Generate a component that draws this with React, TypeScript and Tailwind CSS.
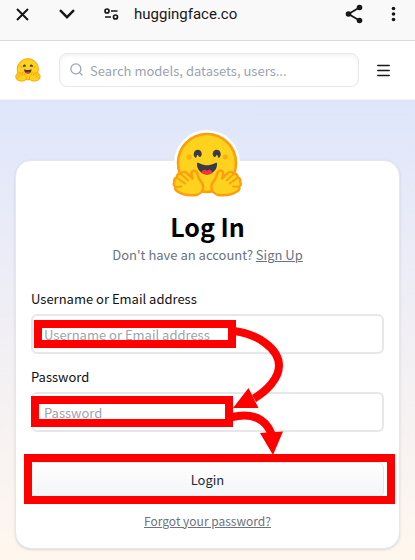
import type { ReactNode } from "react";
import { Menu, Search } from "lucide-react";

function HuggingLogo({ className, halo = false }: { className: string; halo?: boolean }) {
  return (
    <svg viewBox="0 0 71 70" className={className} aria-hidden="true">
      {halo && <circle cx="35" cy="33" r="33" fill="#fff" />}
      <circle cx="35" cy="33" r="29" fill="#ffd21e" stroke="#ff9d0b" strokeWidth="2.6" />
      <circle cx="17.2" cy="27" r="2.6" fill="#ffac14" />
      <circle cx="53.3" cy="27" r="2.6" fill="#ffac14" />
      <path d="M23.800 27.700c-3.300-.9-2.600-8 2-8 4.500.1 5 6 2.300 7.300-1.500.6-1.300-2-2.400-2.100-1.200 0-.8 2.300-1.900 2.800z" fill="#3a3b45" />
      <path d="M46.700 27.700c3.300-.9 2.600-8-2-8-4.500.1-5 6-2.300 7.300 1.500.6 1.300-2 2.400-2.100 1.200 0 .8 2.300 1.900 2.800z" fill="#3a3b45" />
      <path d="M25 33.300c-.7 6 4.500 11.200 10 11.200s10.700-5.200 10-11.200c-.3-1.800-4.300 2-10 2s-9.700-3.800-10-2z" fill="#3a3b45" />
      <path d="M29.700 43c.2-3.700 3.700-4.200 5.300-1.800 1.600-2.400 5.100-1.900 5.300 1.800-3 2.200-7.600 2.200-10.600 0z" fill="#f8313c" />
      <Hand />
      <g transform="matrix(-1 0 0 1 70.500 0)">
        <Hand />
      </g>
    </svg>
  );
}

function Hand() {
  return (
    <g fill="#ffd21e" stroke="#ff9d0b" strokeWidth="2.4" strokeLinecap="round" strokeLinejoin="round">
      <path d="M20.500 48.500c-1-2.500-2-7 .8-7.800 4.200-.7 4.200 4.300 5.700 8 1.800 2.800 4.300 4.500 4.200 8.300-.2 4.500-3.700 8-9.200 8.200-6 .3-12-.7-16.500-3.700-2.200-1.500-3-3.200-2-4.700-2.200-1.300-2.300-3.500-1-4.800-1-2 0-4 2.300-4.200-.3-3 1.700-4.800 4-4 1.500-2.500 4.500-2.500 6.500-.3z" />
      <path d="M15.300 43.500l5.200 5M8.800 43.800l7.200 6.700M4.800 47.800l8.200 5.700M3.500 56.800l6-.3" fill="none" strokeWidth="1.800" />
    </g>
  );
}

function BrowserBar() {
  return (
    <div className="flex h-[41px] items-center border-b border-[#dadada] bg-[#f9f9f9] pb-3 pl-4 pr-[19px] text-[#171717]">
      <button aria-label="Close tab">
        <svg viewBox="0 0 13 13" className="size-[13px]" fill="none" stroke="currentColor" strokeWidth="2">
          <path d="M1 1l11 11M12 1L1 12" />
        </svg>
      </button>
      <button aria-label="Collapse" className="ml-[30px]">
        <svg viewBox="0 0 16 10" className="h-[10px] w-4" fill="none" stroke="currentColor" strokeWidth="2.4">
          <path d="M1 1.200l7 7 7-7" />
        </svg>
      </button>
      <button aria-label="Site settings" className="ml-7">
        <svg viewBox="0 0 16 14" className="h-[14px] w-4" fill="none" stroke="currentColor" strokeWidth="1.700">
          <circle cx="4" cy="4" r="2" />
          <path d="M8 4h6.500M2 10H8" />
          <circle cx="12.500" cy="10" r="2" />
        </svg>
      </button>
      <span className="ml-[15px] flex-1 font-[Roboto,sans-serif] text-[15px] leading-5">huggingface.co</span>
      <button aria-label="Share">
        <svg viewBox="0 0 18 20" className="h-5 w-[18px]" fill="currentColor">
          <path d="M14.500 3.500L3.500 10l11 6.500" fill="none" stroke="currentColor" strokeWidth="1.800" />
          <circle cx="3.500" cy="10" r="2.800" />
          <circle cx="14.500" cy="3.500" r="2.800" />
          <circle cx="14.500" cy="16.500" r="2.800" />
        </svg>
      </button>
      <button aria-label="More" className="ml-7">
        <svg viewBox="0 0 5 18" className="h-[18px] w-[5px]" fill="currentColor">
          <circle cx="2.500" cy="3.500" r="1.800" />
          <circle cx="2.500" cy="9" r="1.800" />
          <circle cx="2.500" cy="14.500" r="1.800" />
        </svg>
      </button>
    </div>
  );
}

function Field({ id, label, type, children }: { id: string; label: string; type: string; children?: ReactNode }) {
  return (
    <div>
      <label htmlFor={id} className="block text-[13px] leading-5 text-[#111]">
        {label}
      </label>
      <input
        id={id}
        type={type}
        placeholder={label}
        className="mt-[5px] block h-10 w-full rounded-md border-2 border-[#e5e7eb] bg-white px-[11px] text-[13px] leading-5 placeholder:text-[#9ca3af]"
      />
      {children}
    </div>
  );
}

// Walkthrough markers, drawn from the card's top left corner
function Markers() {
  return (
    <svg className="pointer-events-none absolute left-0 top-0 h-[388px] w-[384px]" viewBox="16 161 384 388" aria-hidden="true">
      <g fill="none" stroke="#f00" strokeWidth="8">
        <rect x="38" y="324" width="194" height="20" />
        <rect x="35" y="400" width="194" height="23" />
        <rect x="28" y="458" width="363" height="42" />
        <path d="M234 331c24 3 45 18 45 34.500 0 13-12 25-25 33" />
        <path d="M232 417c20-5 34 2 39.500 17" />
      </g>
      <path d="M233 408l15.500-20 10 20zM260 433l23-1.500-10 23.500z" fill="#f00" />
    </svg>
  );
}

export default function App() {
  return (
    <div className="flex min-h-screen flex-col bg-white font-['Noto_Sans_CJK_SC',sans-serif]">
      <BrowserBar />

      <header className="flex h-[59px] items-center border-b border-[#f3f4f6] pl-[15px] pr-[23px]">
        <a href="#" aria-label="Home">
          <HuggingLogo className="size-[26px]" />
        </a>
        <div className="relative ml-[18px] flex-1">
          <Search className="absolute left-[10px] top-[9px] size-[15px] text-[#9ca3af]" strokeWidth={2} />
          <input
            type="search"
            aria-label="Search"
            placeholder="Search models, datasets, users..."
            className="block h-[34px] w-full rounded-lg border border-[#e5e7eb] bg-white pl-[30px] text-[13px] shadow-inner placeholder:text-[#9ca3af]"
          />
        </div>
        <button aria-label="Menu" className="ml-4 text-[#171717]">
          <Menu className="size-[17px]" strokeWidth={2.2} />
        </button>
      </header>

      <main className="flex-1 bg-linear-to-b from-[#dfe6fb] via-[#f1eff5] via-50% to-[#fff7ee] px-[15px] pb-[11px] pt-[60px]">
        <section className="relative flex flex-col rounded-2xl border border-[#e5e7eb] bg-white px-[15px] pb-[17px] shadow-sm">
          <HuggingLogo halo className="-mt-[31px] h-[70px] w-[71px] self-center overflow-visible" />
          <h1 className="mt-[10px] text-center text-[25px] font-bold leading-8 text-black">Log In</h1>
          <p className="mt-[3px] text-center text-[13px] leading-5 text-[#6b7280]">
            Don't have an account?{" "}
            <a href="#" className="underline">Sign Up</a>
          </p>

          <form className="mt-6 flex flex-col gap-[13px]">
            <Field id="username" label="Username or Email address" type="text" />
            <Field id="password" label="Password" type="password" />
            <button
              type="button"
              className="mt-[17px] h-[35px] w-full rounded-md border border-[#e5e7eb] bg-linear-to-b from-white to-[#f3f4f6] text-[13px] leading-5 text-[#1f2937]"
            >
              Login
            </button>
          </form>

          <a href="#" className="mt-[14px] self-center text-[12px] leading-5 text-[#6b7280] underline">
            Forgot your password?
          </a>
          <Markers />
        </section>
      </main>
    </div>
  );
}
